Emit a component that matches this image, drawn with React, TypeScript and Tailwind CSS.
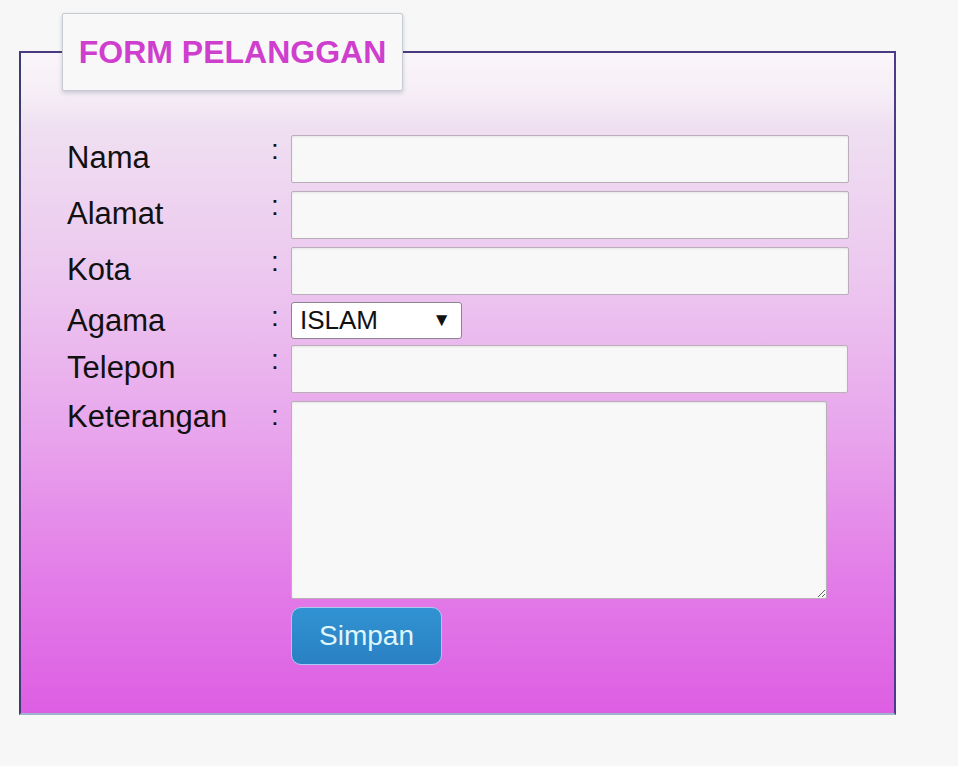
import React from 'react'

const inputClass =
  'h-[48px] rounded-[2px] border border-[#b9aeb9] bg-[#f8f8f8] shadow-[inset_0_1px_2px_rgba(0,0,0,0.08)] outline-none'

function Colon() {
  return <span className="ml-[-2px] mt-[-3px] w-[20px] shrink-0 text-[28px] leading-[36px]">:</span>
}

export default function App() {
  return (
    <div className="min-h-[766px] w-[958px] bg-[#f7f7f7] pt-[13px] font-['Liberation_Sans',Arial,sans-serif] text-[#111]">
      <fieldset className="ml-[19px] h-[702px] w-[877px] border-2 border-t-[#4a3a82] border-l-[#3e3b6e] border-r-[#4b3b8a] border-b-[#9fb3cc] bg-[linear-gradient(to_bottom,#faf6fa_0px,#f6eef6_40px,#efdff1_75px,#ecc6ef_230px,#e8a5ec_380px,#e37ee8_520px,#dd5ee3_660px)] pb-0 pl-[46px] pr-0 pt-[44px]">
        <legend className="ml-[-5px] flex h-[78px] w-[341px] items-center justify-center rounded-[2px] border border-[#c9cbd3] bg-[#f8f8f9] shadow-[0_2px_4px_rgba(60,80,110,0.25)]">
          <span className="text-[32px] font-bold text-[#cf3fcd]">FORM PELANGGAN</span>
        </legend>

        <div className="flex flex-col">
          <div className="flex items-start">
            <label className="w-[206px] shrink-0 text-[31px] leading-[46px]">Nama</label>
            <Colon />
            <input className={`${inputClass} w-[558px]`} />
          </div>
          <div className="mt-[8px] flex items-start">
            <label className="w-[206px] shrink-0 text-[31px] leading-[46px]">Alamat</label>
            <Colon />
            <input className={`${inputClass} w-[558px]`} />
          </div>
          <div className="mt-[8px] flex items-start">
            <label className="w-[206px] shrink-0 text-[31px] leading-[46px]">Kota</label>
            <Colon />
            <input className={`${inputClass} w-[558px]`} />
          </div>
          <div className="mt-[7px] flex items-start">
            <label className="w-[206px] shrink-0 text-[31px] leading-[37px]">Agama</label>
            <Colon />
            <div className="relative">
              <select className="h-[37px] w-[171px] appearance-none rounded-[3px] border border-[#8b8590] bg-white pl-[8px] text-[26px] leading-[35px] outline-none">
                <option>ISLAM</option>
                <option>KRISTEN</option>
                <option>HINDU</option>
                <option>BUDHA</option>
              </select>
              <span className="pointer-events-none absolute right-[11px] top-[8px] text-[19px] leading-[20px] text-[#111]">▼</span>
            </div>
          </div>
          <div className="mt-[6px] flex items-start">
            <label className="w-[206px] shrink-0 text-[31px] leading-[46px]">Telepon</label>
            <Colon />
            <input className={`${inputClass} w-[557px]`} />
          </div>
          <div className="mt-[8px] flex items-start">
            <label className="w-[206px] shrink-0 text-[31px] leading-[32px]">Keterangan</label>
            <Colon />
            <textarea className="h-[198px] w-[536px] rounded-[2px] border border-[#b9aeb9] bg-[#f8f8f8] shadow-[inset_0_1px_2px_rgba(0,0,0,0.08)] outline-none" />
          </div>
          <div className="mt-[8px] flex">
            <div className="w-[224px] shrink-0" />
            <button className="h-[58px] w-[151px] rounded-[10px] border border-[#a9c8f0] bg-[linear-gradient(to_bottom,#3193d3,#2a80c2)] text-[28px] text-[#dff6fb]">
              Simpan
            </button>
          </div>
        </div>
      </fieldset>
    </div>
  )
}
